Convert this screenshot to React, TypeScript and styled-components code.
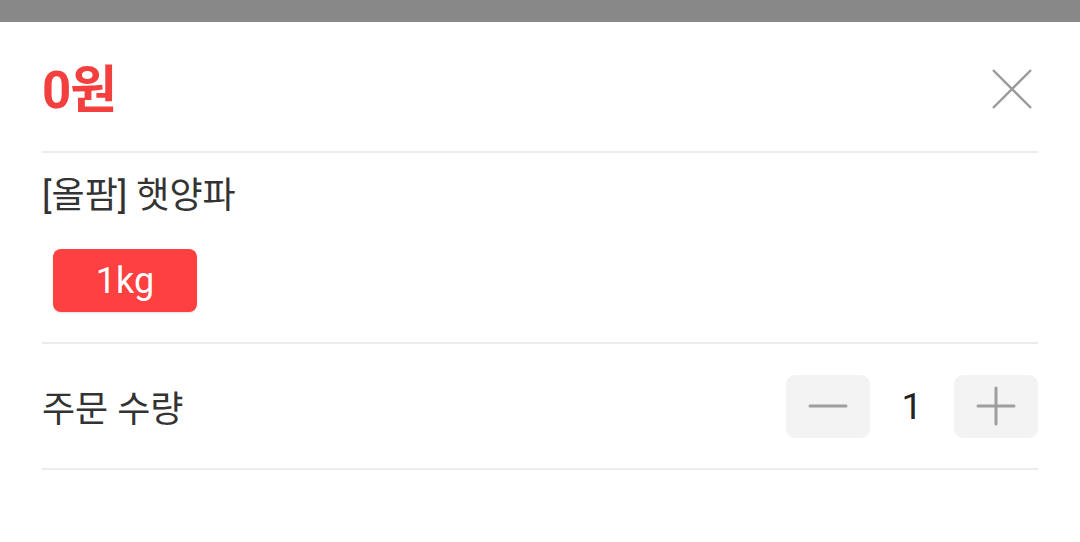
import React, { useState } from 'react'
import styled, { createGlobalStyle } from 'styled-components'

const GlobalStyle = createGlobalStyle`
  html, body {
    margin: 0;
    padding: 0;
    background: #888888;
  }
  body {
    font-family: Roboto, 'Noto Sans CJK KR', sans-serif;
  }
`

export default function App() {
  const [count, setCount] = useState(1)

  return (
    <Page>
      <GlobalStyle />
      <Dim />
      <Sheet>
        <Header>
          <Price>0원</Price>
          <CloseButton aria-label='닫기'>
            <svg width='40' height='40' viewBox='0 0 40 40'>
              <path d='M1 1 L39 39 M39 1 L1 39' stroke='#9a9a9a' strokeWidth='2.4' fill='none' />
            </svg>
          </CloseButton>
        </Header>
        <Section>
          <ProductName>[올팜] 햇양파</ProductName>
          <Options>
            <Chip>1kg</Chip>
          </Options>
        </Section>
        <QtyRow>
          <Label>주문 수량</Label>
          <Stepper>
            <StepButton onClick={() => setCount(Math.max(1, count - 1))}>
              <svg width='40' height='40' viewBox='0 0 40 40'>
                <path d='M2 20 H38' stroke='#9e9e9e' strokeWidth='3' strokeLinecap='round' />
              </svg>
            </StepButton>
            <Count>{count}</Count>
            <StepButton onClick={() => setCount(count + 1)}>
              <svg width='40' height='40' viewBox='0 0 40 40'>
                <path d='M2 20 H38 M20 2 V38' stroke='#9e9e9e' strokeWidth='3' strokeLinecap='round' />
              </svg>
            </StepButton>
          </Stepper>
        </QtyRow>
      </Sheet>
    </Page>
  )
}

const Page = styled.div`
  width: 1080px;
  height: 542px;
  display: flex;
  flex-direction: column;
  overflow: hidden;
`

const Dim = styled.div`
  height: 22px;
  flex-shrink: 0;
  background: #888888;
`

const Sheet = styled.div`
  flex: 1;
  background: #fff;
  padding: 0 42px;
  display: flex;
  flex-direction: column;
`

const Header = styled.div`
  height: 131px;
  display: flex;
  align-items: center;
  justify-content: space-between;
  border-bottom: 2px solid #ececec;
  box-sizing: border-box;
`

const Price = styled.div`
  color: #f43f3f;
  font-size: 51px;
  font-weight: 700;
  letter-spacing: -1px;
  margin-bottom: 2px;
`

const CloseButton = styled.button`
  border: 0;
  background: none;
  padding: 0;
  margin-right: 6px;
  margin-top: 4px;
  display: flex;
  cursor: pointer;
`

const Section = styled.div`
  padding: 20px 0 30px;
  border-bottom: 2px solid #ececec;
`

const ProductName = styled.div`
  color: #333;
  font-size: 36px;
  line-height: 46px;
`

const Options = styled.div`
  display: flex;
  margin-top: 30px;
  padding-left: 11px;
`

const Chip = styled.div`
  width: 144px;
  height: 63px;
  border-radius: 8px;
  background: #ff4040;
  color: #fff;
  font-size: 36px;
  display: flex;
  align-items: center;
  justify-content: center;
  box-shadow: 0 1px 2px rgba(0, 0, 0, 0.12);
`

const QtyRow = styled.div`
  height: 126px;
  display: flex;
  align-items: center;
  justify-content: space-between;
  border-bottom: 2px solid #ececec;
  box-sizing: border-box;
`

const Label = styled.div`
  color: #333;
  font-size: 36px;
`

const Stepper = styled.div`
  display: flex;
  align-items: center;
`

const StepButton = styled.button`
  width: 84px;
  height: 63px;
  border: 0;
  border-radius: 9px;
  background: #f3f3f3;
  display: flex;
  align-items: center;
  justify-content: center;
  padding: 0;
  cursor: pointer;
`

const Count = styled.div`
  width: 84px;
  text-align: center;
  color: #222;
  font-size: 37px;
`
